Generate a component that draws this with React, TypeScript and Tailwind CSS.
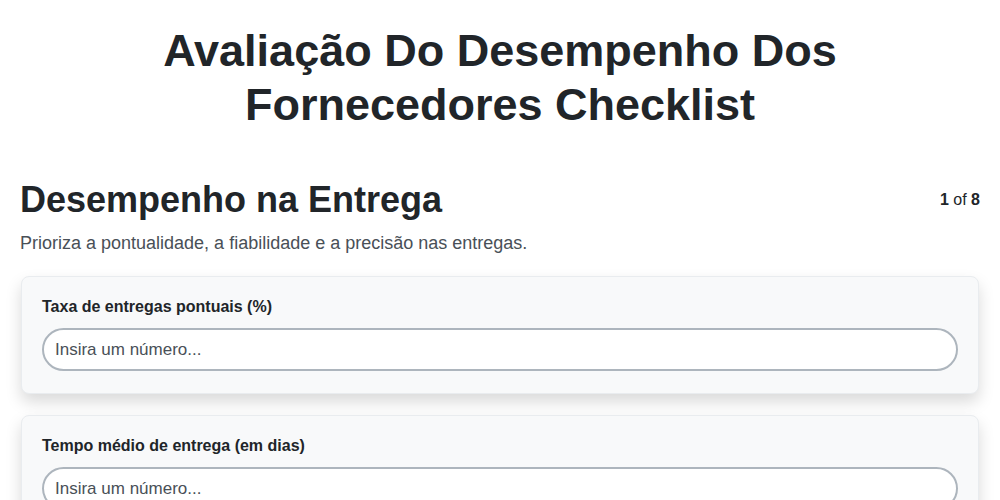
export default function App() {
  const questions = ['Taxa de entregas pontuais (%)', 'Tempo médio de entrega (em dias)'];
  return (
    <div className="min-h-screen bg-white font-['Liberation_Sans',Arial,sans-serif] text-[#212529]">
      <h1 className="mx-auto max-w-[800px] pt-[24px] text-center text-[45px] font-bold leading-[54px]">
        Avaliação Do Desempenho Dos Fornecedores Checklist
      </h1>
      <div className="px-5 pt-[46px]">
        <div className="flex items-start justify-between">
          <h2 className="text-[36px] font-bold leading-[44px]">Desempenho na Entrega</h2>
          <div className="pt-[10px] text-base">
            <span className="font-bold">1</span> of <span className="font-bold">8</span>
          </div>
        </div>
        <p className="mt-[9px] text-[18px] leading-6 text-[#495057]">
          Prioriza a pontualidade, a fiabilidade e a precisão nas entregas.
        </p>
        <div className="mt-[21px] flex flex-col gap-[21px]">
          {questions.map((q) => (
            <div
              key={q}
              className="mx-px rounded-lg border border-[#e9ecef] bg-[#f8f9fa] px-5 pt-[20px] pb-[22px] shadow-[0_8px_16px_rgba(0,0,0,0.15)]"
            >
              <label className="block text-[16px] font-bold leading-5">{q}</label>
              <input
                type="text"
                placeholder="Insira um número..."
                className="mt-[11px] block h-[43px] w-full rounded-full border-2 border-[#adb5bd] bg-white px-[11px] text-[17px] text-[#212529] placeholder:text-[#495057] focus:outline-none"
              />
            </div>
          ))}
        </div>
      </div>
    </div>
  );
}
